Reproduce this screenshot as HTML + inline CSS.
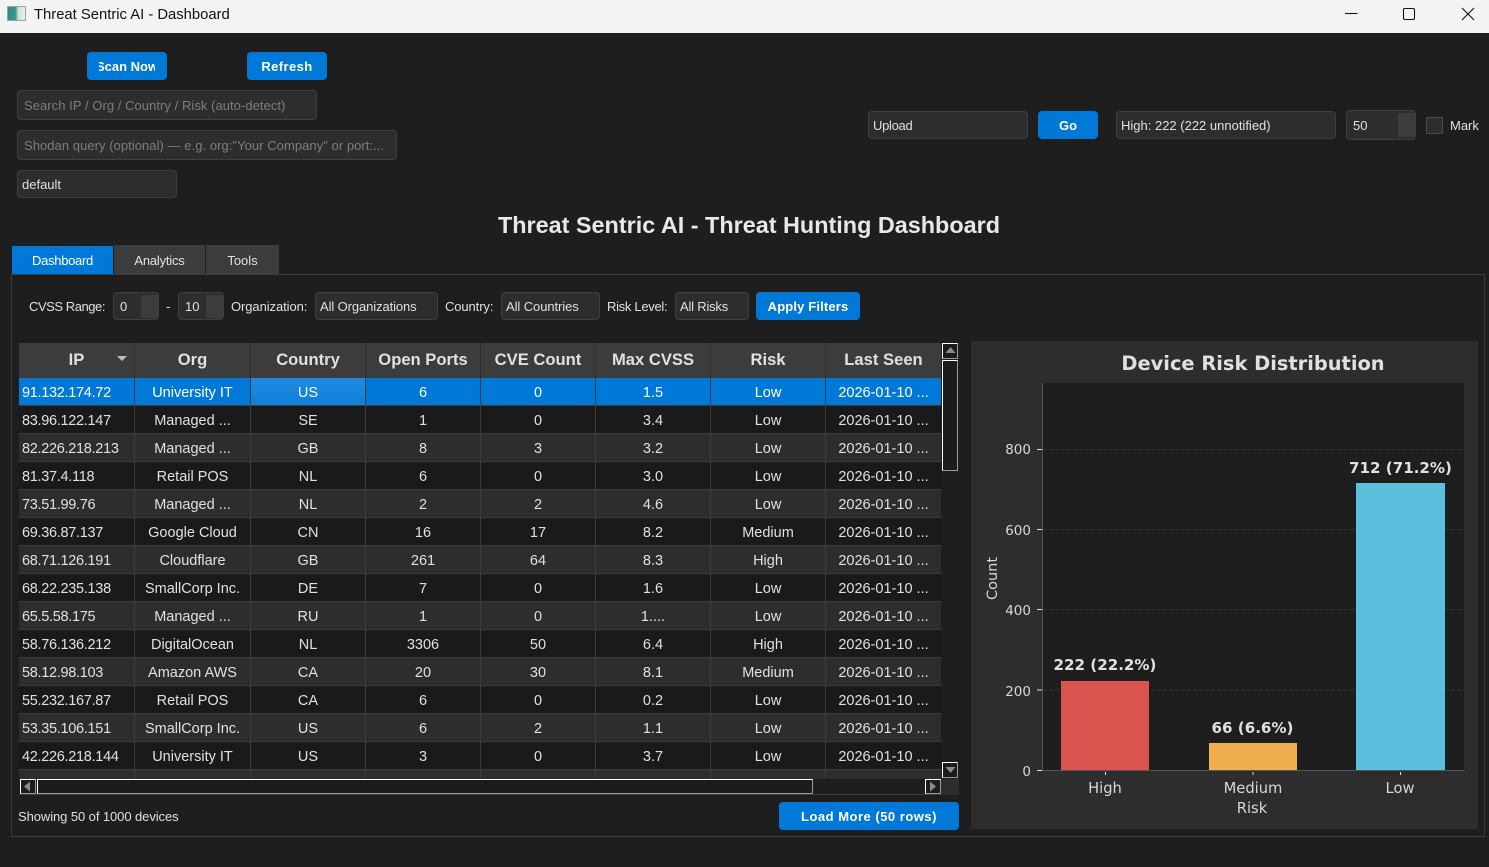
<!DOCTYPE html>
<html><head><meta charset="utf-8"><title>Threat Sentric AI - Dashboard</title>
<style>
html,body{margin:0;padding:0;background:#1e1e1e}
#a{position:relative;width:1489px;height:867px;overflow:hidden;background:#1e1e1e;font-family:"Liberation Sans",sans-serif;font-size:13px;color:#e0e0e0}
#a div,#a span.p{position:absolute;box-sizing:border-box;white-space:nowrap}
.btn{background:#0078d7;color:#fff;font-weight:bold;font-size:13px;text-align:center;border-radius:4px}
.in{background:#2d2d2d;border:1px solid #3f3f3f;border-radius:4px;font-size:13px;color:#e0e0e0}
.ph{color:#7d7d7d}
.grip{background:#3c3c3c}
#t .r{left:0;width:922px;height:28px;border-bottom:1px solid #3c3c3c;font-size:14.5px;line-height:31px;color:#e0e0e0}
#t .c{top:0;width:115px;height:27px;border-right:1px solid #3c3c3c;text-align:center}
#t .c0{left:0;width:116px;text-align:left;padding-left:3px;letter-spacing:-.3px}
#t .c1{left:116px;width:116px}#t .c2{left:232px}#t .c3{left:347px}#t .c4{left:462px}#t .c5{left:577px}#t .c6{left:692px}#t .c7{left:807px;border-right:0}
#t .o{background:#1a1a1a}#t .e{background:#2d2d2d}
#t .s{background:#0078d7;color:#fff}
#t .h{top:0;height:35px;background:#3c3c3c;border-right:1px solid #2f2f2f;color:#e0e0e0;font-weight:bold;font-size:16.6px;line-height:34px;text-align:center;width:115px}
.sb{background:#1c1c1c;border:1px solid;border-color:#fff #9a9a9a #9a9a9a #fff}
</style></head><body><div id="a">

<div style="left:0;top:0;width:1489px;height:33px;background:#f3f3f3"></div>
<div style="left:7px;top:6px;width:19px;height:15px;background:linear-gradient(90deg,#2f8a8a 0,#3f9a7f 45%,#cfe0dc 60%,#e8eeee 100%);border:1px solid #9aa3a8"></div>
<div style="left:34px;top:6px;font-size:14.8px;line-height:18px;color:#111">Threat Sentric AI - Dashboard</div>
<svg style="position:absolute;left:1340px;top:0" width="149" height="33" viewBox="0 0 149 33" fill="none" stroke="#111" stroke-width="1.1">
<path d="M5 13.500H17.500"/><rect x="63.500" y="8.500" width="11" height="11" rx="1.500"/><path d="M122 8L134 20M134 8L122 20"/></svg>

<div class="btn" style="left:87px;top:52px;width:80px;height:28px;line-height:30px"><div style="left:12px;top:0;width:56px;height:28px;overflow:hidden;text-align:center"><span style="display:inline-block;margin-left:-10px;margin-right:-10px">Scan Now</span></div></div>
<div class="btn" style="left:247px;top:52px;width:80px;height:28px;line-height:30px;letter-spacing:.4px">Refresh</div>
<div class="in ph" style="left:17px;top:90px;width:300px;height:30px;line-height:30px;padding-left:6px;letter-spacing:.05px">Search IP / Org / Country / Risk (auto-detect)</div>
<div class="in ph" style="left:17px;top:130px;width:380px;height:30px;line-height:30px;padding-left:6px;letter-spacing:.05px">Shodan query (optional) — e.g. org:"Your Company" or port:...</div>
<div class="in" style="left:17px;top:170px;width:160px;height:28px;line-height:28px;padding-left:4px">default</div>

<div class="in" style="left:868px;top:111px;width:160px;height:28px;line-height:28px;padding-left:4px;letter-spacing:-.3px">Upload</div>
<div class="btn" style="left:1038px;top:111px;width:60px;height:28px;line-height:30px">Go</div>
<div class="in" style="left:1116px;top:111px;width:220px;height:28px;line-height:28px;padding-left:4px">High: 222 (222 unnotified)</div>
<div class="in" style="left:1346px;top:110px;width:70px;height:30px;line-height:29px;padding-left:6px">50</div>
<div class="grip" style="left:1398px;top:113px;width:17px;height:24px"></div>
<div style="left:1426px;top:117px;width:17px;height:17px;background:#2d2d2d;border:1px solid #4a4a4a"></div>
<div style="left:1450px;top:117px;line-height:18px">Mark</div>

<div style="left:0;top:210px;width:1498px;text-align:center;font-size:23.4px;font-weight:bold;line-height:30px;color:#e8e8e8">Threat Sentric AI - Threat Hunting Dashboard</div>

<div style="left:11px;top:274px;width:1474px;height:563px;border:1px solid #3c3c3c"></div>
<div style="left:12px;top:246px;width:101px;height:28px;background:#0078d7;color:#fff;text-align:center;line-height:29px;letter-spacing:-.3px">Dashboard</div>
<div style="left:114px;top:245px;width:91px;height:29px;background:#3c3c3c;text-align:center;line-height:31px;letter-spacing:-.2px">Analytics</div>
<div style="left:206px;top:245px;width:73px;height:29px;background:#3c3c3c;text-align:center;line-height:31px">Tools</div>

<div style="left:29px;top:298px;line-height:18px;letter-spacing:-.45px">CVSS Range:</div>
<div class="in" style="left:113px;top:292px;width:46px;height:28px;line-height:27px;padding-left:6px">0</div>
<div class="grip" style="left:141px;top:295px;width:17px;height:23px"></div>
<div style="left:166px;top:298px;line-height:18px">-</div>
<div class="in" style="left:178px;top:292px;width:46px;height:28px;line-height:27px;padding-left:6px">10</div>
<div class="grip" style="left:206px;top:295px;width:17px;height:23px"></div>
<div style="left:231px;top:298px;line-height:18px;letter-spacing:-.08px">Organization:</div>
<div class="in" style="left:315px;top:292px;width:123px;height:28px;line-height:27px;padding-left:4px;letter-spacing:-.1px">All Organizations</div>
<div style="left:445px;top:298px;line-height:18px;letter-spacing:-.1px">Country:</div>
<div class="in" style="left:501px;top:292px;width:99px;height:28px;line-height:27px;padding-left:4px;letter-spacing:-.08px">All Countries</div>
<div style="left:607px;top:298px;line-height:18px;letter-spacing:-.3px">Risk Level:</div>
<div class="in" style="left:675px;top:292px;width:74px;height:28px;line-height:27px;padding-left:4px;letter-spacing:-.2px">All Risks</div>
<div class="btn" style="left:756px;top:292px;width:104px;height:28px;line-height:30px;letter-spacing:.15px">Apply Filters</div>

<div id="t" style="left:19px;top:343px;width:922px;height:436px;overflow:hidden;background:#1e1e1e">
<div class="h" style="left:0;width:116px">IP</div>
<div class="h" style="left:116px;width:116px">Org</div><div class="h" style="left:232px">Country</div><div class="h" style="left:347px">Open Ports</div><div class="h" style="left:462px">CVE Count</div><div class="h" style="left:577px">Max CVSS</div><div class="h" style="left:692px">Risk</div><div class="h" style="left:807px;border:0">Last Seen</div>
<svg style="position:absolute;left:98px;top:13px" width="10" height="6"><path d="M0 0H10L5 5Z" fill="#bdbdbd"/></svg>

<div class="r s" style="top:35px"><div class="c c0">91.132.174.72</div><div class="c c1">University IT</div><div class="c c2" style="background:linear-gradient(#1f8ae0,#0f7fdb)">US</div><div class="c c3">6</div><div class="c c4">0</div><div class="c c5">1.5</div><div class="c c6">Low</div><div class="c c7">2026-01-10 ...</div></div>
<div class="r o" style="top:63px"><div class="c c0">83.96.122.147</div><div class="c c1">Managed ...</div><div class="c c2">SE</div><div class="c c3">1</div><div class="c c4">0</div><div class="c c5">3.4</div><div class="c c6">Low</div><div class="c c7">2026-01-10 ...</div></div>
<div class="r e" style="top:91px"><div class="c c0">82.226.218.213</div><div class="c c1">Managed ...</div><div class="c c2">GB</div><div class="c c3">8</div><div class="c c4">3</div><div class="c c5">3.2</div><div class="c c6">Low</div><div class="c c7">2026-01-10 ...</div></div>
<div class="r o" style="top:119px"><div class="c c0">81.37.4.118</div><div class="c c1">Retail POS</div><div class="c c2">NL</div><div class="c c3">6</div><div class="c c4">0</div><div class="c c5">3.0</div><div class="c c6">Low</div><div class="c c7">2026-01-10 ...</div></div>
<div class="r e" style="top:147px"><div class="c c0">73.51.99.76</div><div class="c c1">Managed ...</div><div class="c c2">NL</div><div class="c c3">2</div><div class="c c4">2</div><div class="c c5">4.6</div><div class="c c6">Low</div><div class="c c7">2026-01-10 ...</div></div>
<div class="r o" style="top:175px"><div class="c c0">69.36.87.137</div><div class="c c1">Google Cloud</div><div class="c c2">CN</div><div class="c c3">16</div><div class="c c4">17</div><div class="c c5">8.2</div><div class="c c6">Medium</div><div class="c c7">2026-01-10 ...</div></div>
<div class="r e" style="top:203px"><div class="c c0">68.71.126.191</div><div class="c c1">Cloudflare</div><div class="c c2">GB</div><div class="c c3">261</div><div class="c c4">64</div><div class="c c5">8.3</div><div class="c c6">High</div><div class="c c7">2026-01-10 ...</div></div>
<div class="r o" style="top:231px"><div class="c c0">68.22.235.138</div><div class="c c1">SmallCorp Inc.</div><div class="c c2">DE</div><div class="c c3">7</div><div class="c c4">0</div><div class="c c5">1.6</div><div class="c c6">Low</div><div class="c c7">2026-01-10 ...</div></div>
<div class="r e" style="top:259px"><div class="c c0">65.5.58.175</div><div class="c c1">Managed ...</div><div class="c c2">RU</div><div class="c c3">1</div><div class="c c4">0</div><div class="c c5">1....</div><div class="c c6">Low</div><div class="c c7">2026-01-10 ...</div></div>
<div class="r o" style="top:287px"><div class="c c0">58.76.136.212</div><div class="c c1">DigitalOcean</div><div class="c c2">NL</div><div class="c c3">3306</div><div class="c c4">50</div><div class="c c5">6.4</div><div class="c c6">High</div><div class="c c7">2026-01-10 ...</div></div>
<div class="r e" style="top:315px"><div class="c c0">58.12.98.103</div><div class="c c1">Amazon AWS</div><div class="c c2">CA</div><div class="c c3">20</div><div class="c c4">30</div><div class="c c5">8.1</div><div class="c c6">Medium</div><div class="c c7">2026-01-10 ...</div></div>
<div class="r o" style="top:343px"><div class="c c0">55.232.167.87</div><div class="c c1">Retail POS</div><div class="c c2">CA</div><div class="c c3">6</div><div class="c c4">0</div><div class="c c5">0.2</div><div class="c c6">Low</div><div class="c c7">2026-01-10 ...</div></div>
<div class="r e" style="top:371px"><div class="c c0">53.35.106.151</div><div class="c c1">SmallCorp Inc.</div><div class="c c2">US</div><div class="c c3">6</div><div class="c c4">2</div><div class="c c5">1.1</div><div class="c c6">Low</div><div class="c c7">2026-01-10 ...</div></div>
<div class="r o" style="top:399px"><div class="c c0">42.226.218.144</div><div class="c c1">University IT</div><div class="c c2">US</div><div class="c c3">3</div><div class="c c4">0</div><div class="c c5">3.7</div><div class="c c6">Low</div><div class="c c7">2026-01-10 ...</div></div>
<div class="r e" style="top:427px"><div class="c c0"></div><div class="c c1"></div><div class="c c2"></div><div class="c c3"></div><div class="c c4"></div><div class="c c5"></div><div class="c c6"></div><div class="c c7"></div></div>
</div>

<div class="sb" style="left:942px;top:343px;width:16px;height:16px"></div>
<svg style="position:absolute;left:945px;top:347px" width="11" height="7"><path d="M5.500 0L10.500 6H.5Z" fill="#8a8a8a"/></svg>
<div class="sb" style="left:942px;top:360px;width:16px;height:111px"></div>
<div class="sb" style="left:942px;top:762px;width:16px;height:16px"></div>
<svg style="position:absolute;left:945px;top:767px" width="11" height="7"><path d="M.5 0H10.500L5.500 6Z" fill="#8a8a8a"/></svg>

<div style="left:19px;top:779px;width:922px;height:16px;background:#1e1e1e;border-bottom:1px solid #3c3c3c"></div>
<div class="sb" style="left:20px;top:779px;width:16px;height:15px"></div>
<svg style="position:absolute;left:24px;top:781px" width="7" height="11"><path d="M0 5.500L6 .5V10.500Z" fill="#8a8a8a"/></svg>
<div class="sb" style="left:37px;top:779px;width:776px;height:15px"></div>
<div class="sb" style="left:925px;top:779px;width:16px;height:15px"></div>
<svg style="position:absolute;left:930px;top:781px" width="7" height="11"><path d="M6 5.500L0 .5V10.500Z" fill="#8a8a8a"/></svg>
<div style="left:941px;top:779px;width:18px;height:16px;background:#2d2d2d"></div>

<div style="left:18px;top:808px;line-height:18px;font-size:13px;letter-spacing:-.08px">Showing 50 of 1000 devices</div>
<div class="btn" style="left:779px;top:802px;width:180px;height:28px;line-height:30px;letter-spacing:.5px">Load More (50 rows)</div>

<svg style="position:absolute;left:971px;top:341px" width="507" height="488" viewBox="971 341 507 488" font-family="DejaVu Sans, sans-serif">
<rect x="971" y="341" width="507" height="488" fill="#2d2d2d"/>
<rect x="1043" y="383" width="421" height="387" fill="#1e1e1e"/>
<g stroke="#333" stroke-width="1" stroke-dasharray="4 2"><path d="M1043 449.500H1464M1043 529.500H1464M1043 609.500H1464M1043 690H1464"/></g>
<rect x="1061" y="681" width="88" height="89" fill="#d9534f"/>
<rect x="1209" y="743" width="88" height="27" fill="#f0ad4e"/>
<rect x="1356" y="483" width="89" height="287" fill="#5bc0de"/>
<path d="M1042.500 383V770.500H1465" stroke="#555" fill="none"/>
<path d="M1037 449.500H1042M1037 529.500H1042M1037 609.500H1042M1037 690H1042M1037 770.500H1042M1105.500 772V775M1253 772V775M1400.500 772V775" stroke="#e0e0e0" fill="none"/>
<g fill="#d8d8d8" font-size="13.500" text-anchor="end"><text x="1031" y="454">800</text><text x="1031" y="535">600</text><text x="1031" y="615">400</text><text x="1031" y="696">200</text><text x="1031" y="776">0</text></g>
<g fill="#d8d8d8" font-size="14.700" text-anchor="middle"><text x="1105" y="793">High</text><text x="1253" y="793">Medium</text><text x="1252" y="813">Risk</text><text x="1400" y="793">Low</text></g>
<text transform="translate(997 578.500) rotate(-90)" fill="#d8d8d8" font-size="14.500" text-anchor="middle">Count</text>
<text x="1253" y="370" fill="#e0e0e0" font-size="19.400" font-weight="bold" text-anchor="middle">Device Risk Distribution</text>
<g fill="#e0e0e0" font-size="15.100" font-weight="bold" text-anchor="middle"><text x="1105" y="670">222 (22.2%)</text><text x="1252.500" y="733">66 (6.6%)</text><text x="1400.500" y="473">712 (71.2%)</text></g>
</svg>
</div></body></html>
